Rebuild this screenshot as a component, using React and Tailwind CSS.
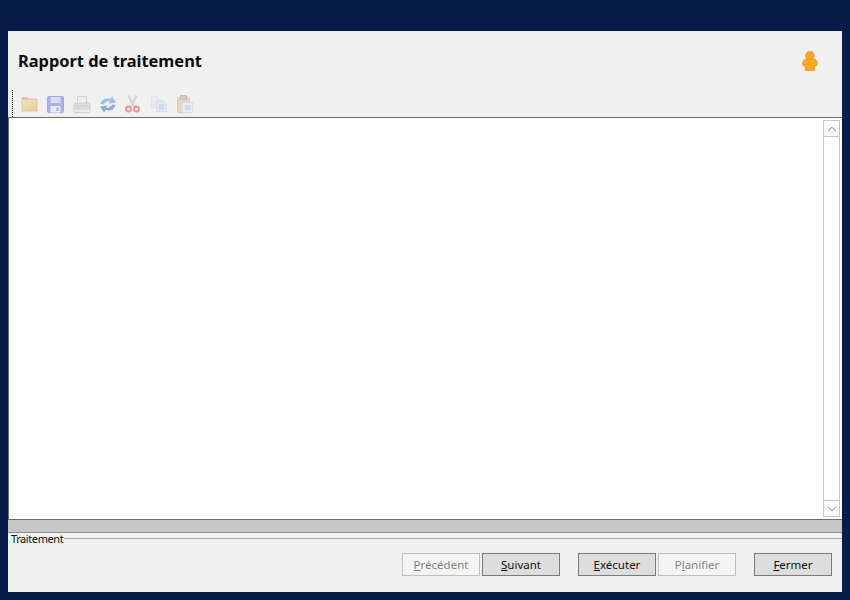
import { ChevronUp, ChevronDown } from "lucide-react";

function FolderIcon() {
  return (
    <svg width="17" height="16" viewBox="0 0 17 16">
      <defs>
        <linearGradient id="folderFill" x1="0" y1="0" x2="1" y2="1">
          <stop offset="0" stopColor="#f3e4c2" />
          <stop offset="1" stopColor="#e6cd98" />
        </linearGradient>
      </defs>
      <path d="M0.5 2 L1.5 1 H6 L7.5 2.5 H15.5 L16.5 3.5 V15 L16 15.5 H1 L0.5 15 Z" fill="#d9cba9" />
      <rect x="1.5" y="4" width="14" height="10.5" fill="url(#folderFill)" />
    </svg>
  );
}

function SaveIcon() {
  return (
    <svg width="17" height="17" viewBox="0 0 17 17">
      <rect x="0.5" y="0.5" width="16" height="16" rx="1" fill="#aeb2e2" stroke="#a4a9dc" />
      <rect x="3.5" y="1" width="10" height="6" fill="#d9dcf3" />
      <rect x="3.5" y="10" width="10" height="6.5" fill="#e9ebf8" />
      <rect x="9.5" y="11.5" width="2" height="3.5" fill="#a4a9dc" />
    </svg>
  );
}

function PrintIcon() {
  return (
    <svg width="18" height="17" viewBox="0 0 18 17">
      <rect x="4.5" y="0.5" width="9" height="7" fill="#efefef" stroke="#d2d2d2" />
      <path d="M1 8.5 L3 7 H15 L17 8.5 V13 H1 Z" fill="#dedede" stroke="#cbcbcb" />
      <rect x="1" y="13" width="16" height="3.5" rx="1" fill="#ebebeb" stroke="#d2d2d2" />
      <rect x="3" y="9.5" width="12" height="1" fill="#cbcbcb" />
    </svg>
  );
}

function RefreshIcon() {
  return (
    <svg width="18" height="17" viewBox="0 0 18 17">
      <path d="M1.5 8 C2.5 3.5 7 1.5 11 3 L13 0.5 L17 6.5 L9.5 7.5 L11 5.5 C8 4.8 6 6 5 8.5 Z" fill="#9cc0de" />
      <path d="M16.5 9 C15.5 13.5 11 15.5 7 14 L5 16.5 L1 10.5 L8.5 9.5 L7 11.5 C10 12.2 12 11 13 8.5 Z" fill="#8aaed4" />
    </svg>
  );
}

function CutIcon() {
  return (
    <svg width="15" height="18" viewBox="0 0 15 18" fill="none">
      <path d="M3.5 0.5 L8.5 11 M11.5 0.5 L6.5 11" stroke="#d4d4d7" strokeWidth="2" />
      <circle cx="3.5" cy="14" r="2.5" stroke="#e29393" strokeWidth="1.8" />
      <circle cx="11.5" cy="14" r="2.5" stroke="#e29393" strokeWidth="1.8" />
    </svg>
  );
}

function CopyIcon() {
  return (
    <svg width="16" height="16" viewBox="0 0 16 16">
      <path d="M0.5 0.5 H6 L9 3.5 V11.5 H0.5 Z" fill="#e9ebf2" stroke="#e2e4ec" />
      <path d="M5.5 4.5 H12 L15.5 8 V15.5 H5.5 Z" fill="#e2e8f6" stroke="#d5ddef" />
      <rect x="7.5" y="8" width="6" height="6" fill="#cfdaf1" />
    </svg>
  );
}

function PasteIcon() {
  return (
    <svg width="16" height="18" viewBox="0 0 16 18">
      <rect x="0.5" y="2.5" width="12" height="15" rx="1" fill="#e7d8bc" stroke="#dccdae" />
      <rect x="3.5" y="0.5" width="6" height="4" fill="#cfcfc8" stroke="#c1c1b9" />
      <rect x="5.5" y="7.5" width="10" height="10" fill="#e8edf7" stroke="#d5ddee" />
      <rect x="8" y="10" width="5.5" height="5.5" fill="#cddaf1" />
    </svg>
  );
}

function UserIcon() {
  return (
    <svg width="16" height="20" viewBox="0 0 16 20" className="blur-[0.3px]">
      <circle cx="8" cy="4.6" r="4.3" fill="#f9a825" stroke="#d98e1f" strokeWidth="0.6" />
      <path d="M3.5 8 H12.5 L14.5 9.5 L15.7 12.5 L14.5 15 L13 14.5 L12.7 19.6 H3.3 L3 14.5 L1.5 15 L0.3 12.5 L1.5 9.5 Z" fill="#fdaa1f" stroke="#dc9120" strokeWidth="0.6" />
    </svg>
  );
}

function ToolIcon({ children }) {
  return <div className="w-[26px] shrink-0 flex items-center mt-px blur-[0.3px]">{children}</div>;
}

function Btn({ before = "", mark, after, disabled }) {
  return (
    <button
      className={
        disabled
          ? "w-[78px] h-[23px] border border-[#bfbfbf] bg-[#f4f4f4] text-[#838383] text-[11.5px]"
          : "w-[78px] h-[23px] border border-[#7a7a7a] bg-[#dddddd] text-[#111111] text-[11.5px]"
      }
    >
      {before}
      <span className="underline">{mark}</span>
      {after}
    </button>
  );
}

export default function App() {
  return (
    <div className="w-[850px] h-[600px] bg-[#081c4b] pt-[31px] pl-2 pr-2 pb-2 font-['Noto_Sans',sans-serif]">
      <div className="h-[561px] bg-[#f0f0f0] flex flex-col">
        <div className="h-[59px] shrink-0 flex items-center justify-between pl-[10px] pr-[24px]">
          <h1 className="text-[16.4px] font-bold text-[#0a0a0a] mt-px">Rapport de traitement</h1>
          <UserIcon />
        </div>

        <div className="h-[27px] shrink-0 flex items-center pl-[4px]">
          <div className="h-[27px] w-px border-l border-dotted border-black mr-[8px]" />
          <ToolIcon><FolderIcon /></ToolIcon>
          <ToolIcon><SaveIcon /></ToolIcon>
          <ToolIcon><PrintIcon /></ToolIcon>
          <ToolIcon><RefreshIcon /></ToolIcon>
          <ToolIcon><CutIcon /></ToolIcon>
          <ToolIcon><CopyIcon /></ToolIcon>
          <ToolIcon><PasteIcon /></ToolIcon>
        </div>

        <div className="h-[403px] shrink-0 bg-white border border-[#6d6d6d] border-r-0 flex justify-end pt-[2px] pb-[2px] pr-[2px]">
          <div className="w-[17px] border border-[#c8c8c8] flex flex-col justify-between">
            <div className="h-[16px] border-b border-[#c8c8c8] flex items-center justify-center">
              <ChevronUp size={14} strokeWidth={1.5} color="#666666" />
            </div>
            <div className="h-[16px] border-t border-[#c8c8c8] flex items-center justify-center">
              <ChevronDown size={14} strokeWidth={1.5} color="#666666" />
            </div>
          </div>
        </div>

        <div className="h-[13px] shrink-0 bg-[#c6c6c6] border-b border-[#8f8f8f]" />

        <div className="flex items-center h-[11px] shrink-0">
          <span className="text-[11px] leading-[11px] tracking-[-0.4px] text-[#111111] pl-[3px] pr-px">Traitement</span>
          <div className="flex-1 h-px bg-[#a8a8a8]" />
        </div>

        <div className="flex justify-end pr-[10px] mt-[9px]">
          <div className="flex gap-[2px]">
            <Btn mark="P" after="récédent" disabled />
            <Btn mark="S" after="uivant" />
          </div>
          <div className="flex gap-[2px] ml-[18px]">
            <Btn mark="E" after="xécuter" />
            <Btn before="P" mark="l" after="anifier" disabled />
          </div>
          <div className="flex ml-[18px]">
            <Btn mark="F" after="ermer" />
          </div>
        </div>
      </div>
    </div>
  );
}
